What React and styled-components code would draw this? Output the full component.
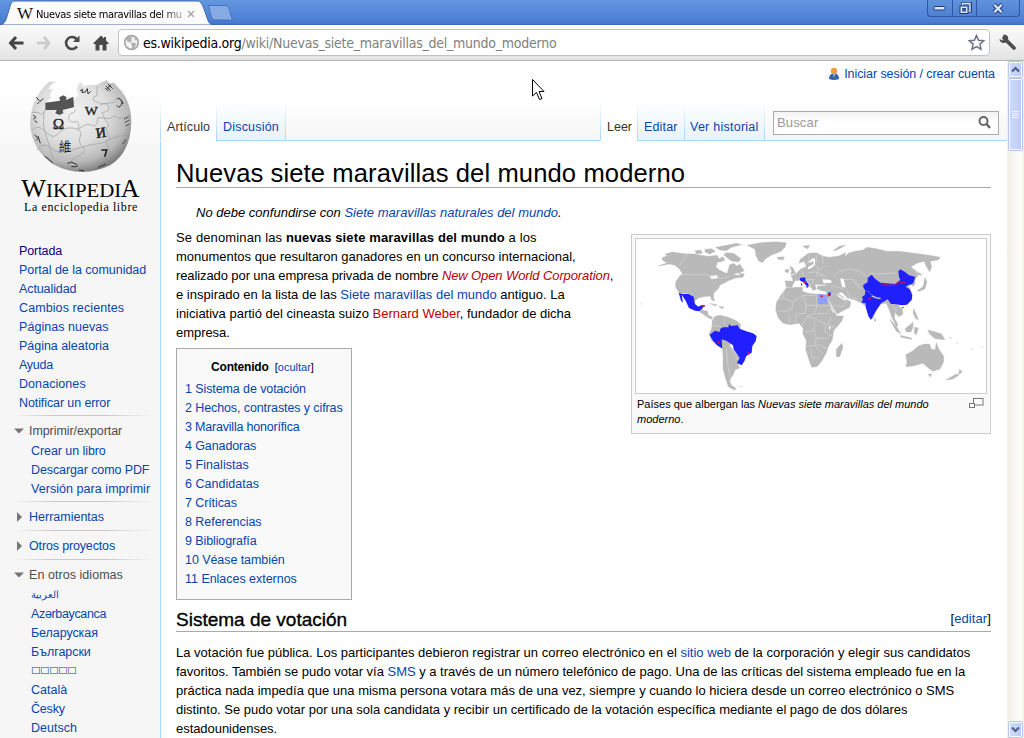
import React from "react";
import styled, { createGlobalStyle, css } from "styled-components";

const Global = createGlobalStyle`
  * { box-sizing: border-box; }
  html, body { margin: 0; padding: 0; }
  body { width: 1024px; height: 738px; overflow: hidden; background: #f6f6f6;
    font-family: "Liberation Sans", Arial, sans-serif; font-size: 13px; color: #000; }
`;

const line = "#a7d7f9";
const ui = `"DejaVu Sans Condensed", "DejaVu Sans", Tahoma, sans-serif`;

const Window = styled.div`display: flex; flex-direction: column; width: 1024px; height: 738px; overflow: hidden; position: relative;`;

/* browser chrome */
const TabStrip = styled.div`
  height: 25px; flex: none; display: flex; align-items: flex-start;
  background: linear-gradient(#6296df 0, #5487d8 55%, #4a7ad0 92%, #3c68b4 100%);
`;
const TabShapes = styled.svg`position: absolute; left: 0; top: 0;`;
const TabLabel = styled.div`
  position: relative; display: flex; align-items: center; height: 25px; padding: 3px 0 0 17px; width: 236px;
  font: 11px ${ui};
`;
const Favicon = styled.span`font: 17px/18px "Liberation Serif", serif; width: 19px; letter-spacing: -1px; color: #111;`;
const TabTitle = styled.span`
  width: 148px; white-space: nowrap; letter-spacing: -0.33px;
  mask-image: linear-gradient(90deg, #000 125px, rgba(0,0,0,.3) 147px);
`;
const TabClose = styled.svg`margin-left: 3px;`;
const WinButtons = styled.div`
  margin-left: auto; margin-right: 4px; display: flex; height: 17px; width: 93px;
  border: 1px solid #2d56a5; border-top: 0; border-radius: 0 0 4px 4px; overflow: hidden;
  background: linear-gradient(#6192dc, #5081d2);
`;
const WinButton = styled.div`
  width: ${(p) => p.$w}px; border-right: ${(p) => (p.$last ? "0" : "1px solid #2d56a5")};
  display: flex; justify-content: center; align-items: center;
`;
const Toolbar = styled.div`
  height: 36px; flex: none; display: flex; align-items: center; padding: 0 7px 0 7px;
  background: linear-gradient(#fafafa, #f1f1f1 50%, #e2e2e2); border-bottom: 1px solid #b4b4b4;
`;
const ToolIcon = styled.svg`margin-right: ${(p) => p.$gap || 0}px; flex: none;`;
const Omnibox = styled.div`
  flex: 1; height: 27px; border: 1px solid #bfc2c6; border-radius: 4px; background: #fff; margin-right: 8px;
  display: flex; align-items: center; padding: 0 4px 0 4px;
`;
const Url = styled.div`
  flex: 1; font: 14px ${ui}; color: #808080; letter-spacing: ${(p) => p.$ls}px; white-space: nowrap;
  b { font-weight: 400; color: #000; }
`;

/* page */
const Viewport = styled.div`flex: 1; display: flex; min-height: 0;`;
const Page = styled.div`
  width: 1007px; display: flex; overflow: hidden;
  background: linear-gradient(#fff 0, #fff 20px, #f6f6f6 100px, #f6f6f6 100%);
`;
const Sidebar = styled.aside`width: 160px; flex: none; font-size: 12.5px;`;
const Logo = styled.svg`display: block;`;
const Nav = styled.nav`padding-top: ${(p) => p.$top || 0}px;`;
const NavItem = styled.div`
  height: 19px; line-height: 21px; padding-left: ${(p) => (p.$in ? 31 : 19)}px; white-space: nowrap;
  letter-spacing: ${(p) => p.$ls || 0}px; color: ${(p) => (p.$visited ? "#0b0080" : "#0645ad")};
  ${(p) => p.$boxes && css`font-family: "DejaVu Sans", sans-serif; font-size: 9.6px; line-height: 18px;`}
  ${(p) => p.$small && css`font-size: 10px; line-height: 19px;`}
`;
const Rule = styled.div`
  height: 1px; margin: 3px 8px 5px 12px;
  background: linear-gradient(90deg, rgba(200,200,200,0), #c8c8c8 30%, #c8c8c8 66%, rgba(200,200,200,0));
`;
const NavHeading = styled.div`
  display: flex; align-items: center; height: 20px; padding: 0 0 1px 14px; line-height: 19px; letter-spacing: ${(p) => p.$ls || 0}px;
  color: ${(p) => (p.$open ? "#4d4d4d" : "#0645ad")};
  span { padding-top: 1px; }
  svg { width: 10px; height: 10px; margin-right: 5px; }
`;
const Main = styled.main`flex: 1; display: flex; flex-direction: column; min-width: 0;`;
const Personal = styled.div`
  height: 40px; background: #fff; display: flex; justify-content: flex-end; padding: 4px 12px 0 0; color: #0645ad; font-size: 12.5px;
  svg { margin: 2px 4px 0 0; }
`;
const TabRow = styled.div`
  display: flex; height: 40px; background: linear-gradient(#fff, #f5f5f5);
`;
const fade = `linear-gradient(#fff, ${line})`;
const PageTab = styled.div`
  width: ${(p) => p.$w}px; flex: none; padding: 16px 0 0 ${(p) => p.$pad ?? 7}px; line-height: 20px; white-space: nowrap; font-size: 12.5px;
  letter-spacing: ${(p) => p.$ls || 0}px;
  color: ${(p) => (p.$on ? "#333" : "#0645ad")};
  background: ${(p) => (p.$on
    ? `${fade} left / 1px 100% no-repeat, #fff`
    : `${fade} left / 1px 100% no-repeat, linear-gradient(#fff, #e8f2f8)`)};
  border-bottom: 1px solid ${(p) => (p.$on ? "#fff" : line)};
`;
const TabSpace = styled.div`
  flex: ${(p) => (p.$w ? `0 0 ${p.$w}px` : 1)}; border-bottom: 1px solid ${line}; background: ${fade} left / 1px 100% no-repeat;
  padding: 10px 8px 0 9px;
`;
const Search = styled.div`
  height: 24px; border: 1px solid #aaa; display: flex; align-items: center; justify-content: space-between;
  background: linear-gradient(#f3f3f3, #fff 50%); padding: 0 6px 2px 3px; color: #999; letter-spacing: .15px;
`;
const Content = styled.article`flex: 1; background: #fff; border-left: 1px solid ${line}; padding: 14px 16px 0 15px;`;
const Title = styled.h1`
  margin: 0; height: 33px; border-bottom: 1px solid #aaa; font-weight: 400; font-size: 25.6px; line-height: 36px;
  letter-spacing: ${(p) => p.$ls}px; white-space: nowrap;
`;
const Hatnote = styled.div`margin: 15px 0 6px; padding-left: 20px; font-style: italic; line-height: 19px; letter-spacing: ${(p) => p.$ls}px;`;
const Lead = styled.div`display: flex; height: 378px;`;
const LeadText = styled.div`flex: 1; min-width: 0;`;
const Line = styled.span`display: block; height: 19px; line-height: ${(p) => p.$lh || 19}px; white-space: nowrap; letter-spacing: ${(p) => p.$ls}px;`;
const Para = styled.p`margin: 0;`;
const A = styled.a`color: ${(p) => (p.$red ? "#ba0000" : "#0645ad")};`;
const Toc = styled.div`
  margin-top: 6px; width: 176px; height: 252px; border: 1px solid #aaa; background: #f9f9f9; padding: 9px 0 0 8px; font-size: 12.5px;
`;
const TocTitle = styled.div`
  text-align: center; padding-right: 11px; height: 21px; line-height: 18px; font-size: 12px; font-weight: 700; letter-spacing: -.2px;
  small { font-size: 11px; font-weight: 400; margin-left: 3px; letter-spacing: 0; }
`;
const Thumb = styled.figure`
  margin: 6px 0 0; width: 360px; height: 200px; border: 1px solid #ccc; background: #f9f9f9; padding: 3px; flex: none;
`;
const MapBox = styled.svg`display: block; width: 352px; height: 156px; border: 1px solid #ccc; background: #fff;`;
const Caption = styled.figcaption`
  display: flex; justify-content: space-between; padding: 3px 3px 0 2px; font-size: 11px;
  span { display: block; line-height: 15px; white-space: nowrap; }
  svg { margin-top: 1px; }
`;
const SectionHead = styled.div`
  display: flex; justify-content: space-between; border-bottom: 1px solid #aaa; height: 26px; margin-bottom: 11px;
  line-height: 26px; letter-spacing: .1px;
`;
const H2 = styled.h2`margin: 0; font-size: 19px; font-weight: 400; line-height: 28px; letter-spacing: ${(p) => p.$ls}px; -webkit-text-stroke: .35px #000;`;

/* scroll bar */
const Scroll = styled.div`
  width: 17px; display: flex; flex-direction: column; background: linear-gradient(90deg, #f0efe8, #f7f6f1 40%, #fefefb 85%, #eeede5);
  padding: 0 1px 0 1px;
`;
const ScrollPart = styled.div`
  height: ${(p) => p.$h}px; margin-top: ${(p) => p.$mt}; border: 1px solid #b4c6f0; border-radius: 2px; box-shadow: inset 0 0 0 1px #fff;
  background: linear-gradient(90deg, #cbdafd, #c3d3fc 60%, #b5c8f6); display: flex; align-items: center; justify-content: center;
`;
const Cursor = styled.svg`position: absolute; left: 532px; top: 79px;`;

const Arrow = ({ up }) => (
  <svg width="9" height="7" viewBox="0 0 9 7"><path d={up ? "M1 5.5 4.5 2 8 5.5" : "M1 1.5 4.5 5 8 1.5"} fill="none" stroke="#4d6185" strokeWidth="2.2" /></svg>
);

const Globe = () => (
  <Logo width="160" height="160" viewBox="0 3 480 480">
    <defs>
      <radialGradient id="ball" cx=".42" cy=".35" r=".68">
        <stop offset="0" stopColor="#f2f2f2" /><stop offset=".5" stopColor="#dedede" />
        <stop offset=".8" stopColor="#b9b9b9" /><stop offset="1" stopColor="#777" />
      </radialGradient>
    </defs>
    <path fill="url(#ball)" d="M168 64 156 72 146 86 158 88 150 104 152 114 136 128 136 148 166 150 170 162 186 162 188 150 222 148 220 120 236 104 230 90 236 70 246 68 250 80 262 76 290 74 320 60 328 70 342 68 356 84 Q394 122 394 190 Q390 280 330 316 Q244 358 158 312 Q94 268 90 190 Q92 116 146 66Z" />
    <path fill="#555" d="M136 128 180 122 178 112 190 106 200 112 198 120 220 110 222 142 188 150 190 160 178 165 166 160 170 150 136 150Z" />
    <g fill="none" stroke="#a2a2a2" strokeWidth="2.2">
      <path d="M134 150Q126 190 136 220T160 300M226 148 222 158Q204 160 206 176T230 184Q240 190 234 208M234 208Q246 214 240 232T250 262 230 290 236 330M292 78 290 108Q274 110 282 122L300 130M300 134Q322 126 326 140T306 158L318 184Q334 196 318 206L330 238Q314 244 322 258T324 300M96 210Q114 196 126 206T150 226 180 216 234 208M234 208Q262 186 276 196T294 172L330 176Q344 160 356 176L388 168M110 270Q130 244 150 262T190 276 244 262 290 252 330 238 380 226M96 158Q118 154 124 164L136 152M300 132 340 128Q352 110 366 120" />
    </g>
    <g fill="#222" fontFamily="Liberation Serif, serif" fontWeight="700">
      <text x="158" y="207" fontSize="46" fontWeight="400" stroke="#222">Ω</text>
      <text x="254" y="164" fontSize="37" fontWeight="400" stroke="#222" textLength="39" lengthAdjust="spacingAndGlyphs">W</text>
      <text x="288" y="232" fontSize="42" transform="rotate(-8 305 220)" fontWeight="400" stroke="#222" strokeWidth="1.5">И</text>
      <text x="176" y="274" fontSize="38" fontFamily="Noto Sans CJK TC, sans-serif" fontWeight="400">維</text>
      <path d="M304 270H320L314 290" fill="none" stroke="#222" strokeWidth="5" />
    </g>
    <g fill="none" stroke="#333" strokeWidth="3">
      <path d="M109 112 120 124 130 116M118 126 112 132M240 92 248 88 246 98 256 96 262 86 264 102 272 94M318 78 332 92M324 72 338 86M320 86 332 76M316 84 326 94M352 114Q364 116 366 126T356 142L350 136M364 122 370 132M100 166 108 172 100 178M104 182 112 188M104 224 114 236 108 242M114 228 121 250M134 288 158 308M202 310Q214 302 228 312T214 320M294 322 318 312M236 330 252 332" />
      <path d="M372 178 386 170M374 188 388 180M376 198 388 192M368 252 378 238" strokeWidth="2.4" />
    </g>
    <g fill="#000" fontFamily="Liberation Serif, serif">
      <text x="64" y="411" fontSize="75" textLength="74" lengthAdjust="spacingAndGlyphs">W</text>
      <text x="138" y="411" fontSize="58" textLength="226" lengthAdjust="spacingAndGlyphs">IKIPEDI</text>
      <text x="362" y="411" fontSize="75" textLength="56" lengthAdjust="spacingAndGlyphs">A</text>
      <text x="72" y="453" fontSize="36" textLength="340">La enciclopedia libre</text>
    </g>
  </Logo>
);

const WorldMap = () => (
  <MapBox viewBox="19 21 1050 462">
    <g fill="#b9b9b9" stroke="#b9b9b9" strokeWidth="1" strokeLinejoin="round">
      {/* North and Central America */}
      <path d="M84 103 112 92 100 86 96 77 112 72 106 66 128 60 165 65 195 66 214 70 236 73 262 70 268 80 280 74 286 84 268 92 258 104 272 110 286 116 292 126 296 112 300 98 312 94 322 102 330 96 344 116 330 122 310 126 322 130 344 126 340 136 318 138 296 146 286 152 272 158 266 170 252 184 252 196 254 208 246 204 242 192 222 194 206 198 196 208 184 186 148 182 138 166 138 150 148 134 158 126 150 112 136 100 118 96Z" />
      <path d="M208 230 220 234 234 238 236 250 250 256 244 262 228 252 210 240Z" />
      <path d="M226 52 246 50 258 58 240 66 226 60ZM258 46 290 40 320 34 336 38 306 46 290 56 270 54ZM290 62 312 64 334 80 326 90 308 88 296 80 282 68ZM196 56 214 54 218 64 200 66ZM240 214 262 218 258 222ZM266 222 284 226 276 230ZM326 122 344 126 338 132Z" />
      <path d="M352 40 392 32 440 29 470 32 466 46 454 58 424 70 408 80 398 92 386 86 378 68 376 52ZM442 76 464 74 460 84 446 82Z" />
      {/* South America */}
      <path d="M248 264 258 252 272 250 296 256 320 266 332 276 332 290 300 340 332 380 326 400 330 408 316 414 312 426 300 444 304 458 320 470 314 474 296 464 288 440 280 410 280 370 278 346 246 326 238 306 246 290Z" />
      {/* Europe and Asia */}
      <path d="M466 146 490 148 488 138 484 132 498 126 508 116 514 110 530 104 524 88 508 94 512 82 536 64 560 62 578 72 598 76 628 72 648 62 646 74 658 62 676 58 700 54 712 46 742 50 770 58 810 58 856 64 900 70 932 76 926 84 902 88 906 104 900 120 888 100 884 88 862 94 844 104 858 116 866 130 854 146 858 152 850 164 846 158 836 162 846 180 846 200 830 216 804 218 818 232 820 246 808 254 796 242 794 258 806 280 800 282 786 256 778 232 770 214 754 216 738 238 730 260 720 258 708 222 696 214 676 204 654 198 636 180 624 184 650 202 664 210 660 226 622 246 610 226 596 200 588 178 574 176 562 170 566 156 556 158 560 172 550 176 540 156 528 144 536 160 544 166 532 164 518 144 496 146 486 166 470 166Z" />
      {/* Africa */}
      <path d="M470 168 500 166 518 166 518 178 536 184 562 186 592 188 598 208 610 234 622 252 642 252 636 268 612 296 608 324 596 344 590 362 576 388 562 404 546 406 538 384 528 352 530 326 520 306 520 288 508 274 480 278 460 274 446 258 438 234 440 212 452 192 462 178Z" />
      <path d="M636 334 640 346 630 374 620 374 620 352Z" />
      {/* islands */}
      <path d="M480 102 490 108 498 124 482 128 486 118ZM468 112 478 112 476 122 466 120ZM520 42 540 40 534 50 524 46ZM610 56 630 42 648 40 622 54ZM886 136 892 150 886 170 870 178 862 176 880 164ZM862 118 878 130 866 128ZM780 262 800 282 814 306 800 298ZM812 310 846 318 846 322 814 316ZM826 290 844 276 850 270 850 286 844 300 830 300ZM854 286 866 288 860 308 854 304ZM852 230 860 246 866 264 858 260 850 242ZM894 294 918 300 936 306 946 324 930 322 916 320 900 306ZM734 258 740 266 734 268Z" />
      <path d="M828 368 850 356 866 342 884 336 900 336 904 350 916 354 920 332 928 352 942 372 942 390 930 412 910 418 896 408 880 394 850 402 828 404 832 390ZM896 426 906 426 902 436ZM990 412 998 420 986 428ZM948 444 980 426 988 430 968 442Z" />
    </g>
    {/* inland seas */}
    <g fill="#fff">
      <path d="M536 104 552 96 550 86 542 92 536 90 550 78 556 80 556 98 546 108 534 112ZM578 142 604 144 606 152 582 154ZM632 138 642 142 648 166 638 166 634 152ZM240 132 262 130 266 138 246 142ZM596 282 604 286 600 294ZM264 90 284 92 296 104 290 124 270 114 260 104ZM590 160 566 162 566 158 590 158Z" />
      <path d="M622 186 640 198 652 202 646 206 626 194ZM594 198 612 244 608 240Z" />
    </g>
    {/* borders */}
    <g fill="none" stroke="#dedede" strokeWidth="1.6">
      <path d="M148 128H232L250 136 276 140 300 132M176 62 150 100M440 206 460 198 490 210 520 190 560 190M460 198 462 178M490 210 486 232 462 240 446 236M520 190 530 220 526 244 500 246 496 272M562 186V220L556 244 530 254 518 280M530 220 560 220M600 222H562M562 244 590 246 604 230M604 252 596 276 614 286M530 254 556 260 588 276M526 300 552 296 560 318 592 320M552 296 556 270M560 318 556 340 528 344M556 340 570 338 590 350M544 350 548 378M560 346 580 366M548 378 570 378M588 276 586 300 608 312M478 250 480 276M520 144 552 142M536 122 560 120 580 128M516 116 524 134 510 140M556 98 566 112 560 130 590 132M552 142 548 156M566 112 590 102M578 64 580 96M612 134 630 118 660 110 690 118 712 134M640 142 668 142 690 160M604 160 618 164 640 170M650 170 660 196 688 202M672 150 694 172M718 124 760 126 800 122M602 186 622 190M610 220 640 224 654 208M540 66 534 96M560 68V90" />
      <path d="M250 280 274 284M282 256 284 276M300 344 314 366 324 384M290 350 294 394 302 440M786 216 800 236 796 246" />
    </g>
    {/* highlighted countries */}
    <g fill="#2020ff">
      <path d="M147 182 160 186 178 186 192 194 196 216 206 224 214 220 226 220 216 232 208 238 196 236 178 228 168 206 156 188 160 212 154 206Z" />
      <path d="M240 308 256 296 270 300 272 290 280 286 296 286 298 276 304 282 324 280 330 290 350 298 370 304 381 312 378 328 368 342 366 362 350 372 344 388 336 400 322 392 330 378 322 366 312 352 310 340 290 326 276 322 278 350 262 340 250 326Z" />
      <path d="M700 160 714 150 714 138 726 128 736 140 752 152 796 156 812 144 808 134 806 118 812 112 826 120 838 130 856 134 854 146 848 156 838 158 828 164 840 172 848 190 846 204 832 218 816 220 796 216 784 216 774 202 764 208 754 214 742 232 730 252 724 264 716 252 708 224 708 214 696 212 700 200 696 196 706 188 706 174 702 168Z" />
      <path d="M510 138 526 136 528 146 538 158 534 164 520 150 512 146ZM528 163 536 164 532 168ZM514 152 518 158 514 162ZM596 182 602 180 604 190 594 194ZM816 226 822 224 820 230Z" />
    </g>
    <path fill="#8f9fff" d="M564 186 590 188 594 216 564 216Z" />
    <path d="M706 178 716 178 726 190 742 198 756 200" stroke="#7f86f4" strokeWidth="1.800" fill="none" />
    <path d="M726 192 742 198 752 199" stroke="#b9b9b9" strokeWidth="5" fill="none" />
    <path d="M756 158 796 160 806 152 828 152" stroke="#d01060" strokeWidth="3" fill="none" />
    <g fill="#ff1020">
      <rect x="218" y="219" width="7" height="6" /><rect x="264" y="328" width="6" height="6" /><rect x="354" y="361" width="6" height="6" />
      <rect x="523" y="147" width="6" height="6" /><rect x="573" y="190" width="6" height="6" /><rect x="594" y="186" width="6" height="6" /><rect x="717" y="197" width="6" height="6" />
    </g>
    <g fill="#ccc"><rect x="32" y="214" width="4" height="3" /><rect x="980" y="332" width="4" height="3" /><rect x="1024" y="350" width="8" height="2" /><rect x="1054" y="344" width="6" height="2" /><rect x="330" y="462" width="8" height="2" /><rect x="958" y="316" width="8" height="3" /></g>
  </MapBox>
);

const Tri = ({ open }) => (
  <svg viewBox="0 0 10 10"><path fill="#777" d={open ? "M0 2.5H10L5 7.5Z" : "M3 0V10L8 5Z"} /></svg>
);

const main = [["Portada", -0.1], ["Portal de la comunidad", -0.03], ["Actualidad", -0.1], ["Cambios recientes", 0.1], ["Páginas nuevas", 0.05], ["Página aleatoria", -0.03], ["Ayuda", -0.25], ["Donaciones", 0.07], ["Notificar un error", -0.1]];
const prints = [["Crear un libro", -0.07], ["Descargar como PDF", -0.1], ["Versión para imprimir", 0.05]];
const langs = [["Azərbaycanca", -0.35], ["Беларуская", -0.08], ["Български", -0.05], ["□□□□□", 0], ["Català", 0], ["Česky", -0.2], ["Deutsch", 0]];
const toc = [["Sistema de votación", -0.1], ["Hechos, contrastes y cifras", -0.1], ["Maravilla honorífica", -0.2], ["Ganadoras", -0.1], ["Finalistas", 0.05], ["Candidatas", 0.03], ["Críticas", -0.1], ["Referencias", -0.05], ["Bibliografía", -0.1], ["Véase también", -0.07], ["Enlaces externos", -0.03]];

export default function App() {
  return (
    <Window>
      <Global />
      <TabStrip>
        <TabShapes width="236" height="25" viewBox="0 0 236 25">
          <path d="M0 25C5 24 6 20 8 13 11 4 11 1 15 1H197C201 1 202 4 204 9 208 20 208 24 213 25Z" fill="#fbfbfb" stroke="#4169ac" strokeWidth="1" />
          <path d="M208.500 5.500H226C228 5.500 229 8 230 12L232.500 20H215C212 20 211 16 210 12Z" fill="#85aae4" stroke="#4471bd" />
        </TabShapes>
        <TabLabel>
          <Favicon>W</Favicon>
          <TabTitle>Nuevas siete maravillas del mu</TabTitle>
          <TabClose width="8" height="8" viewBox="0 0 8 8"><path d="M1 1 7 7M7 1 1 7" stroke="#aaa" strokeWidth="1.6" /></TabClose>
        </TabLabel>
        <WinButtons>
          <WinButton $w={25}><svg width="13" height="6"><rect x="1" y="1.500" width="11" height="3.500" rx="1" fill="#dbe6fa" stroke="#1f3c78" /></svg></WinButton>
          <WinButton $w={25}>
            <svg width="14" height="13" viewBox="0 0 14 13"><path d="M4.500 3.500V1H12.500V9H10" fill="none" stroke="#1f3c78" strokeWidth="3" /><path d="M4.500 3.500V1.500H12V9H10" fill="none" stroke="#dbe6fa" strokeWidth="1.500" /><rect x="2" y="4" width="8" height="7.500" fill="#dbe6fa" stroke="#1f3c78" /><rect x="4.800" y="6.500" width="2.500" height="2.500" fill="#5081d2" stroke="#1f3c78" /></svg>
          </WinButton>
          <WinButton $w={42} $last>
            <svg width="12" height="11" viewBox="0 0 12 11"><path d="M2 1.500 10 9.500M10 1.500 2 9.500" stroke="#1f3c78" strokeWidth="4.200" /><path d="M2.300 1.800 9.700 9.200M9.700 1.800 2.300 9.200" stroke="#dbe6fa" strokeWidth="2.300" /></svg>
          </WinButton>
        </WinButtons>
      </TabStrip>
      <Toolbar>
        <ToolIcon width="18" height="16" viewBox="0 0 18 16" $gap={11}><path d="M9 2 3.500 8 9 14M4 8H16.500" fill="none" stroke="#444" strokeWidth="3" /></ToolIcon>
        <ToolIcon width="16" height="16" viewBox="0 0 16 16" $gap={12}><path d="M8 2 13 8 8 14M1 8H13" fill="none" stroke="#ccc" strokeWidth="2.800" /></ToolIcon>
        <ToolIcon width="17" height="16" viewBox="0 0 17 16" $gap={12}><path d="M13 11.500A6 6 0 1 1 12.500 4" fill="none" stroke="#4a4a4a" strokeWidth="2.600" /><path d="M15.500 0.500V7H9Z" fill="#4a4a4a" /></ToolIcon>
        <ToolIcon width="16" height="16" viewBox="0 0 16 16" $gap={9}><path d="M8 0.500 0.500 8V9H2.500V15.500H6.500V10H9.500V15.500H13.500V9H15.500V8L13 5.500V2H11V3.500Z" fill="#4a4a4a" /></ToolIcon>
        <Omnibox>
          <ToolIcon width="17" height="17" viewBox="0 0 17 17" $gap={3}>
            <circle cx="8.500" cy="8.500" r="6.800" fill="#f4f4f4" stroke="#a4a4a4" strokeWidth="1.700" />
            <path d="M3 5 6 2.500 9.500 3 8 5.500 9 7.500 6.500 8.500 4 7ZM8 9 11 8.500 13.500 10 11 14 9 14.500 9 12ZM11 3 14 6 12 6.500Z" fill="#b0b0b0" />
          </ToolIcon>
          <Url $ls={-0.25}><b>es.wikipedia.org</b>/wiki/Nuevas_siete_maravillas_del_mundo_moderno</Url>
          <ToolIcon width="17" height="17" viewBox="0 0 17 17"><path d="M8.500 1.500 10.600 6.200 15.700 6.700 11.900 10.100 13 15.200 8.500 12.500 4 15.200 5.100 10.100 1.300 6.700 6.400 6.200Z" fill="#fff" stroke="#66718a" strokeWidth="1.500" /></ToolIcon>
        </Omnibox>
        <ToolIcon width="19" height="17" viewBox="0 0 19 17"><path d="M6 4 10 8 16 14" stroke="#4d4d4d" strokeWidth="3.800" strokeLinecap="round" /><path d="M5 1C9 0 11 3 10 6L7 9C4 9.500 1.500 8 1.500 5L4.500 6.500 7 4.500Z" fill="#4d4d4d" /></ToolIcon>
      </Toolbar>

      <Viewport>
        <Page>
          <Sidebar>
            <Globe />
            <Nav $top={20}>
              {main.map(([t, ls], i) => <NavItem key={t} $ls={ls} $visited={i === 0}>{t}</NavItem>)}
            </Nav>
            <Rule />
            <NavHeading $open $ls={-0.08}><Tri open /><span>Imprimir/exportar</span></NavHeading>
            <Nav>{prints.map(([t, ls]) => <NavItem key={t} $in $ls={ls}>{t}</NavItem>)}</Nav>
            <Rule />
            <NavHeading><Tri /><span>Herramientas</span></NavHeading>
            <Rule />
            <NavHeading $ls={-0.15}><Tri /><span>Otros proyectos</span></NavHeading>
            <Rule />
            <NavHeading $open $ls={0.05}><Tri open /><span>En otros idiomas</span></NavHeading>
            <Nav>
              <NavItem $in $small>العربية</NavItem>
              {langs.map(([t, ls]) => <NavItem key={t} $in $ls={ls} $boxes={t[0] === "□"}>{t}</NavItem>)}
            </Nav>
          </Sidebar>
          <Main>
            <Personal>
              <svg width="12" height="14" viewBox="0 0 12 14"><path d="M1 12C1 8 3 6.500 6 6.500S11 8 11 12Q6 14 1 12Z" fill="#3465a4" /><path d="M5 7H7L6 11Z" fill="#9ec1ee" /><circle cx="6" cy="4" r="3.200" fill="#eba13a" /></svg>
              <Line $ls={-0.07}>Iniciar sesión / crear cuenta</Line>
            </Personal>
            <TabRow>
              <PageTab $on $w={56} $ls={0.1}>Artículo</PageTab>
              <PageTab $w={69} $ls={0.2}>Discusión</PageTab>
              <TabSpace />
              <PageTab $on $w={37}>Leer</PageTab>
              <PageTab $w={47} $ls={0.15}>Editar</PageTab>
              <PageTab $w={80} $pad={6} $ls={0.25}>Ver historial</PageTab>
              <TabSpace $w={243}>
                <Search>Buscar
                  <svg width="15" height="15" viewBox="0 0 15 15"><circle cx="6.500" cy="6" r="4" fill="none" stroke="#666" strokeWidth="2" /><path d="M9.500 9 13 13" stroke="#666" strokeWidth="2.600" /></svg>
                </Search>
              </TabSpace>
            </TabRow>
            <Content>
              <Title $ls={0.1}>Nuevas siete maravillas del mundo moderno</Title>
              <Hatnote $ls={0.01}>No debe confundirse con <A>Siete maravillas naturales del mundo</A>.</Hatnote>
              <Lead>
                <LeadText>
                  <Para>
                    <Line $ls={0.13}>Se denominan las <b>nuevas siete maravillas del mundo</b> a los</Line>
                    <Line $ls={-0.01}>monumentos que resultaron ganadores en un concurso internacional,</Line>
                    <Line $ls={-0.1}>realizado por una empresa privada de nombre <i><A $red>New Open World Corporation</A></i>,</Line>
                    <Line $ls={0.01}>e inspirado en la lista de las <A>Siete maravillas del mundo</A> antiguo. La</Line>
                    <Line $ls={0}>iniciativa partió del cineasta suizo <A $red>Bernard Weber</A>, fundador de dicha</Line>
                    <Line $ls={-0.05}>empresa.</Line>
                  </Para>
                  <Toc>
                    <TocTitle>Contenido <small>[<A>ocultar</A>]</small></TocTitle>
                    {toc.map(([t, ls], i) => <Line key={t} $lh={21} $ls={ls}><A>{i + 1} {t}</A></Line>)}
                  </Toc>
                </LeadText>
                <Thumb>
                  <WorldMap />
                  <Caption>
                    <div><span>Países que albergan las <i>Nuevas siete maravillas del mundo</i></span><span><i>moderno</i>.</span></div>
                    <svg width="15" height="11" viewBox="0 0 15 11"><rect x="4.500" y="0.500" width="9.500" height="6.500" fill="#fff" stroke="#777" /><rect x="0.500" y="5.500" width="5" height="4" fill="#fff" stroke="#777" /></svg>
                  </Caption>
                </Thumb>
              </Lead>
              <SectionHead><H2 $ls={0}>Sistema de votación</H2><span>[<A>editar</A>]</span></SectionHead>
              <Para>
                <Line $ls={0}>La votación fue pública. Los participantes debieron registrar un correo electrónico en el <A>sitio web</A> de la corporación y elegir sus candidatos</Line>
                <Line $ls={-0.02}>favoritos. También se pudo votar vía <A>SMS</A> y a través de un número telefónico de pago. Una de las críticas del sistema empleado fue en la</Line>
                <Line $ls={0}>práctica nada impedía que una misma persona votara más de una vez, siempre y cuando lo hiciera desde un correo electrónico o SMS</Line>
                <Line $ls={-0.01}>distinto. Se pudo votar por una sola candidata y recibir un certificado de la votación específica mediante el pago de dos dólares</Line>
                <Line $ls={-0.05}>estadounidenses.</Line>
              </Para>
            </Content>
          </Main>
        </Page>
        <Scroll>
          <ScrollPart $h={17} $mt="0"><Arrow up /></ScrollPart>
          <ScrollPart $h={73} $mt="0">
            <svg width="7" height="8" viewBox="0 0 7 8"><path d="M0 .5H7M0 2.500H7M0 4.500H7M0 6.500H7" stroke="#eef4fe" /></svg>
          </ScrollPart>
          <ScrollPart $h={17} $mt="auto"><Arrow /></ScrollPart>
        </Scroll>
      </Viewport>
      <Cursor width="13" height="22" viewBox="0 0 13 22"><path d="M.5 .5V17L4.500 13.500 7.500 20.500 10 19.500 7 12.500H12Z" fill="#fff" stroke="#000" /></Cursor>
    </Window>
  );
}
